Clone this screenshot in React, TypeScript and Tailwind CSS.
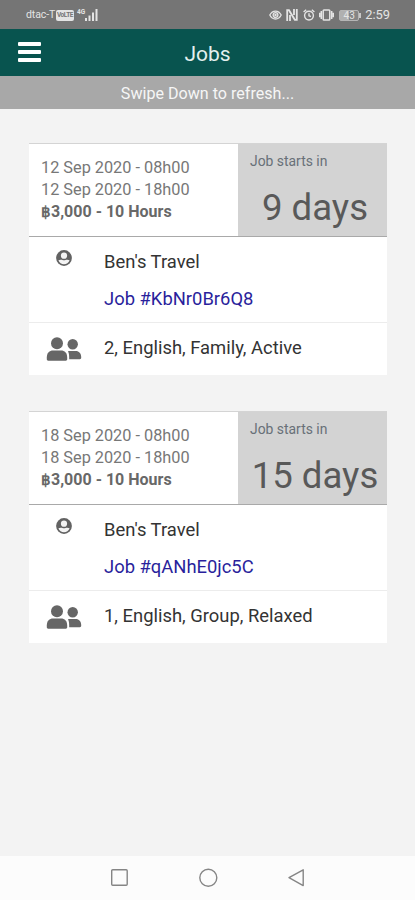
interface Job {
  id: string;
  start: string;
  end: string;
  pay: string;
  startsIn: string;
  client: string;
  details: string;
}

const jobs: Job[] = [
  {
    id: "KbNr0Br6Q8",
    start: "12 Sep 2020 - 08h00",
    end: "12 Sep 2020 - 18h00",
    pay: "3,000 - 10 Hours",
    startsIn: "9 days",
    client: "Ben's Travel",
    details: "2, English, Family, Active",
  },
  {
    id: "qANhE0jc5C",
    start: "18 Sep 2020 - 08h00",
    end: "18 Sep 2020 - 18h00",
    pay: "3,000 - 10 Hours",
    startsIn: "15 days",
    client: "Ben's Travel",
    details: "1, English, Group, Relaxed",
  },
];

const StatusBar = () => (
  <div className="h-[29px] shrink-0 bg-[#757575] text-[#e4e4e4] flex items-center justify-between pl-[26px] pr-[25px] pt-px">
    <div className="flex items-center">
      <span className="text-[10.5px] leading-none w-[30px] whitespace-nowrap tracking-[-0.1px]">dtac-T</span>
      <span className="w-[18px] h-[11px] rounded-[2px] bg-[#e4e4e4] text-[#757575] text-[6.5px] font-bold leading-[11px] text-center tracking-[-0.4px]">
        VoLTE
      </span>
      <span className="ml-[3px] mb-[6px] text-[6.5px] leading-none font-bold">4G</span>
      <svg className="w-[13px] h-3" viewBox="0 0 13 12" fill="currentColor">
        <rect x="0" y="9" width="2" height="3" />
        <rect x="3.5" y="6.5" width="2" height="5.5" />
        <rect x="7" y="3.5" width="2" height="8.5" />
        <rect x="10.5" y="0" width="2" height="12" />
      </svg>
    </div>
    <div className="flex items-center">
      <svg className="w-[13px] h-3" viewBox="0 0 13 12" fill="none" stroke="currentColor" strokeWidth="1.3">
        <path d="M0.8 6C3.5 0.7 9.5 0.7 12.2 6C9.5 11.3 3.5 11.3 0.8 6Z" />
        <circle cx="6.5" cy="6" r="2.4" />
        <circle cx="6.5" cy="6" r="0.6" />
      </svg>
      <svg className="ml-1 w-3 h-3" viewBox="0 0 12 12" fill="none" stroke="currentColor" strokeWidth="1.8">
        <path d="M1.2 12V1.2H3L8.8 10.8H10.8V0" />
        <path d="M4 12V6M8 0V6" />
      </svg>
      <svg className="ml-[5px] w-3 h-3" viewBox="0 0 12 12" fill="none" stroke="currentColor" strokeWidth="1.4">
        <circle cx="6" cy="6.6" r="4.4" />
        <path d="M6 4.2V6.8L8 7.5M0.6 3L3.2 0.8M11.4 3L8.8 0.8" />
      </svg>
      <svg className="ml-1 w-[15px] h-3" viewBox="0 0 15 12" fill="none" stroke="currentColor" strokeWidth="1.5">
        <rect x="4.2" y="0.9" width="6.6" height="10.2" rx="0.8" />
        <path d="M2.3 2V10M12.7 2V10M0.7 3.8V8.2M14.3 3.8V8.2" />
      </svg>
      <span className="ml-[5px] flex items-center">
        <span className="w-5 h-[11px] rounded-[2px] border border-[#b5b5b5] bg-gradient-to-r from-[#b0b0b0] from-50% to-[#858585] to-50% text-[10px] leading-[9px] text-center">
          43
        </span>
        <span className="w-[2px] h-[5px] bg-[#c8c8c8]" />
      </span>
      <span className="ml-1 text-[12.9px] leading-none">2:59</span>
    </div>
  </div>
);

const UserIcon = () => (
  <svg className="w-4 h-4" viewBox="0 0 16 16">
    <circle cx="8" cy="8" r="7.9" fill="#626262" />
    <circle cx="8" cy="5.7" r="3.1" fill="#f4f4f4" />
    <path
      d="M2.4 10.3C3.8 9.4 5.5 9.6 6.4 10C7.5 10.4 8.5 10.4 9.6 10C10.5 9.6 12.2 9.4 13.6 10.3C12.6 13 10.5 14.3 8 14.3C5.5 14.3 3.4 13 2.4 10.3Z"
      fill="#f4f4f4"
    />
  </svg>
);

const GroupIcon = () => (
  <svg className="w-9 h-6" viewBox="0 0 36 24" fill="#666666">
    <circle cx="11" cy="6.2" r="6" />
    <path d="M0.8 20.5C0.8 16 3.5 13.5 7 13.5H15C18.6 13.5 21.2 16 21.2 20.5V22.3C21.2 23.2 20.7 23.7 19.8 23.7H2.2C1.3 23.7 0.8 23.2 0.8 22.3Z" />
    <circle cx="26.7" cy="7.2" r="5.2" />
    <path d="M22 14.3C22.5 14.1 23 14 23.4 14H29.8C33 14 35.2 16.4 35.2 20V20.8C35.2 21.7 34.7 22.2 33.8 22.2H23.2C23.2 19 23.2 16.6 22 14.3Z" />
  </svg>
);

const JobCard = ({ job }: { job: Job }) => (
  <div className="bg-white">
    <div className="flex h-[94px] border-t border-t-[#d4d4d4] border-b border-b-[#a9a9a9]">
      <div className="w-[209px] pl-3 pt-[13px] text-[16.3px] leading-[22px] text-[#777777]">
        <p>{job.start}</p>
        <p>{job.end}</p>
        <p className="flex text-base leading-[22px] font-bold text-[#686868]">
          <span className="w-[10px] text-[15px]">฿</span>
          {job.pay}
        </p>
      </div>
      <div className="flex-1 bg-[#d3d3d3]">
        <p className="pl-3 pt-2 text-[13.9px] leading-[18px] text-[#687078]">Job starts in</p>
        <p className="mt-[17px] pl-[5px] text-center text-[36.6px] leading-[42px] whitespace-nowrap text-[#595959]">
          {job.startsIn}
        </p>
      </div>
    </div>
    <div className="flex h-[85px]">
      <div className="w-[75px] pl-[27px] pt-[13px]">
        <UserIcon />
      </div>
      <div className="pt-[7px] text-[18.4px] leading-[36.5px]">
        <p className="text-[#333333]">{job.client}</p>
        <p className="text-[#2a1f9c]">Job #{job.id}</p>
      </div>
    </div>
    <div className="flex h-[53px] items-center border-t border-[#ececec]">
      <div className="w-[75px] pl-[17px]">
        <GroupIcon />
      </div>
      <p className="pb-[2px] text-[18.4px] text-[#333333] whitespace-nowrap">{job.details}</p>
    </div>
  </div>
);

const App = () => {
  return (
    <div className="w-[415px] h-[900px] flex flex-col overflow-hidden bg-[#f3f3f3] font-[Roboto,sans-serif]">
      <StatusBar />
      <header className="h-[47px] shrink-0 bg-[#08544f] grid grid-cols-[1fr_auto_1fr] items-center px-[18px]">
        <button aria-label="Menu" className="flex flex-col gap-1 w-[23px] pb-px">
          <span className="h-1 rounded-[1px] bg-white" />
          <span className="h-1 rounded-[1px] bg-white" />
          <span className="h-1 rounded-[1px] bg-white" />
        </button>
        <h1 className="pt-[2px] text-[21px] leading-7 text-[#e3f0ee]">Jobs</h1>
      </header>
      <div className="h-[33px] shrink-0 bg-[#a8a8a8] text-[16.1px] leading-[35px] text-center text-[#f6f6f6]">
        Swipe Down to refresh...
      </div>
      <main className="flex-1 flex flex-col gap-9 pt-[34px] pl-[29px] pr-7">
        {jobs.map((job) => (
          <JobCard key={job.id} job={job} />
        ))}
      </main>
      <nav className="h-11 shrink-0 bg-[#fcfcfc] flex items-center justify-center">
        <svg className="w-[200px] h-5" viewBox="0 0 200 20" fill="none" stroke="#858585" strokeWidth="1.4">
          <rect x="3.7" y="1.8" width="15.5" height="15.5" rx="1" />
          <circle cx="100.3" cy="9.7" r="8.5" />
          <path d="M195.2 1.8V17.6L181 9.7Z" strokeLinejoin="round" />
        </svg>
      </nav>
    </div>
  );
};

export default App;
